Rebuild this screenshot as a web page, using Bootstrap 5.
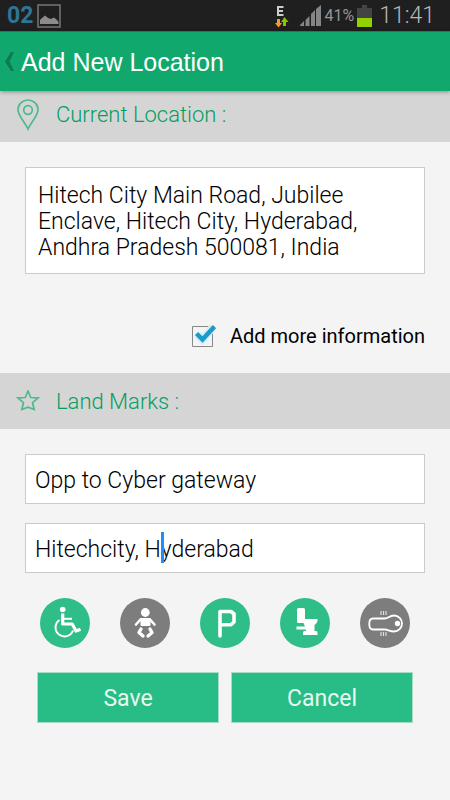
<!DOCTYPE html>
<html lang="en">
<head>
<meta charset="utf-8">
<meta name="viewport" content="width=device-width, initial-scale=1">
<title>Add New Location</title>
<link href="https://cdn.jsdelivr.net/npm/bootstrap@5.3.0/dist/css/bootstrap.min.css" rel="stylesheet">
<style>
  body { background: #f4f4f4; font-family: Roboto, "Liberation Sans", sans-serif; color: #000; }
  .status-bar { background: #1f1f1f; height: 31px; color: #969696; padding: 0 15px 0 7px; }
  .status-count { color: #2f7596; font-size: 23px; line-height: 31px; font-weight: 700; }
  .status-signals { gap: 3px; }
  .status-percent { font-size: 16px; line-height: 31px; }
  .status-clock { font-size: 23px; line-height: 28px; font-weight: 300; color: #b8b8b8; }
  .app-bar { background: #11a86d; height: 60px; padding: 0 5px; gap: 7px; box-shadow: 0 1px 4px rgba(0, 0, 0, .35); border-top: 1px solid #0b8757; }
  .app-title { font-family: "Liberation Sans", Arial, sans-serif; font-size: 25px; line-height: 30px; color: #fff; }
  .section-head { background: #d5d5d5; color: #11a86d; padding: 2px 16px 0; gap: 16px; height: 56px; }
  .section-head.first { height: 51px; padding: 0 16px 4px; }
  .section-head h2 { font-size: 22px; line-height: 26px; font-weight: 300; color: #049e60; }
  .section-head svg { stroke: #4dba8c; }
  .field { border: 1px solid #cbcbcb; border-radius: 0; color: #000; background: #fff; font-size: 23px; line-height: 26px; font-weight: 300; }
  .field:focus { box-shadow: none; border-color: #cbcbcb; }
  textarea.field { padding: 15px 12px 13px; resize: none; overflow: hidden; height: 107px; }
  input.field { height: 50px; padding: 2px 9px 0; }
  .address { padding: 25px 25px 0; }
  .more-row { padding: 48px 25px 22px 0; gap: 14px; }
  .more-row label { font-size: 20px; line-height: 29px; }
  .tick { appearance: none; width: 24px; height: 24px; margin: 0;
    background: url("data:image/svg+xml,%3Csvg xmlns='http://www.w3.org/2000/svg' viewBox='0 0 24 24'%3E%3Cpath d='M.5 1.500h20v20H.5z' fill='%23f4f4f4' stroke='%23888'/%3E%3Cpath d='M5.500 9.500l5 5L21 2' fill='none' stroke='%23d4edf6' stroke-width='8'/%3E%3Cpath d='M4.500 8.500l6 6L22.500 1.500' fill='none' stroke='%231a9bc9' stroke-width='4.500'/%3E%3C/svg%3E") center / contain no-repeat; }
  .tick:not(:checked) { background: none; border: 1px solid #888; }
  .landmarks { padding: 25px 25px 0; gap: 19px; }
  .text-cursor { position: absolute; left: 136px; top: 9px; width: 3px; height: 31px; background: #1a8fff; }
  .amenities { padding: 25px 40px 0; }
  .amenity { width: 50px; height: 50px; border: 0; padding: 0; background: #2fbe87; }
  .amenity.off { background: #7d7d7d; }
  .actions { padding: 24px 37px 0; gap: 12px; }
  .action { height: 51px; border: 1px solid #a9dcc6; border-radius: 0; background: #28bd87; color: #e6f8f0; font-size: 23px; line-height: 28px; padding: 3px 0 0; }
  .action:hover { background: #20a776; color: #fff; }
</style>
</head>
<body>
<div class="status-bar d-flex align-items-center justify-content-between">
  <div class="d-flex align-items-center gap-1">
    <span class="status-count">02</span>
    <svg width="24" height="24" viewBox="0 0 24 24" aria-hidden="true"><path d="M1 1h22v22H1z" fill="none" stroke="#777" stroke-width="1.500"/><path d="M3 20v-4l2-2 3-2.500 3 2.500 3 1 3-1.500 3 2.500 1.500 2v2z" fill="#8b8b8b"/></svg>
  </div>
  <div class="status-signals d-flex align-items-center">
    <svg width="14" height="24" viewBox="0 0 14 24" aria-hidden="true"><path d="M8.500 3H3v8h5.500M3 7h5" fill="none" stroke="#ccc" stroke-width="2"/><path d="M2 15h3v4h2l-3.500 4.500L0 19h2z" fill="#f79a2c"/><path d="M8 22h3v-4h2.500L9.500 13 6 18h2z" fill="#8cc000"/></svg>
    <svg class="ms-2" width="21" height="21" viewBox="0 0 21 21" aria-hidden="true"><path d="M0 21v-1l4-4v5zm5.500 0v-6l4-4v10zm5.500 0V9l4-4v16zm5 0V4l5-4v21z" fill="#858585"/></svg>
    <span class="status-percent">41%</span>
    <svg width="15" height="22" viewBox="0 0 15 22" aria-hidden="true"><path d="M0 3h5V0h5v3h5v10H0z" fill="#444"/><path d="M0 13h15v9H0z" fill="#91d100"/></svg>
    <span class="status-clock ms-1">11:41</span>
  </div>
</div>

<header class="app-bar d-flex align-items-center position-relative">
  <a href="#" class="d-flex" aria-label="Back"><svg width="9" height="19" viewBox="0 0 9 19"><path d="M6 0h3L4.500 9.500 9 19H6L0 9.500z" fill="#0b7c50"/></svg></a>
  <h1 class="app-title m-0">Add New Location</h1>
</header>

<main>
  <div class="section-head first d-flex align-items-center">
    <svg width="24" height="32" viewBox="0 0 24 32" fill="none" stroke-width="1.700" aria-hidden="true"><path d="M12 30C9 23 2 17 2 10.500a10 9.500 0 0 1 20 0c0 6.500-7 12.500-10 19.500z"/><circle cx="12" cy="11" r="4.300"/></svg>
    <h2 class="m-0"><label for="address">Current Location :</label></h2>
  </div>
  <div class="address">
    <textarea id="address" class="form-control field d-block" rows="3">Hitech City Main Road, Jubilee Enclave, Hitech City, Hyderabad, Andhra Pradesh 500081, India</textarea>
  </div>
  <div class="more-row d-flex justify-content-end align-items-center">
    <input class="tick" type="checkbox" id="more" checked>
    <label for="more">Add more information</label>
  </div>

  <div class="section-head d-flex align-items-center">
    <svg width="24" height="24" viewBox="0 0 24 24" fill="none" stroke-width="1.700" aria-hidden="true"><path d="M12 1l2.700 6.500 7.300.500-5.500 4.700 1.700 6.800-6.200-2.300L5.800 19.500l1.700-6.800L2 8 9.300 7.500z"/></svg>
    <h2 class="m-0">Land Marks :</h2>
  </div>
  <div class="landmarks d-flex flex-column">
    <input class="form-control field" type="text" aria-label="Land mark" value="Opp to Cyber gateway">
    <div class="position-relative">
      <input class="form-control field" type="text" aria-label="Area" value="Hitechcity, Hyderabad">
      <span class="text-cursor"></span>
    </div>
  </div>

  <div class="amenities d-flex justify-content-between">
    <button type="button" class="amenity rounded-circle" aria-label="Wheelchair access"><svg width="50" height="50" viewBox="0 0 50 50" fill="none" stroke="#fff"><circle cx="22.700" cy="11.500" r="2.800" fill="#fff" stroke="none"/><path d="M22.700 15.500v10.500h9.500l3.800 7 4.500-1.800" stroke-width="3.200" stroke-linejoin="round"/><path d="M23 20.800h9" stroke-width="2"/><path d="M19.500 22a9 9 0 1 0 13.500 10.500" stroke-width="2"/></svg></button>
    <button type="button" class="amenity off rounded-circle" aria-label="Baby changing"><svg width="50" height="50" viewBox="0 0 50 50" fill="#fff" stroke="#fff" stroke-linecap="round" stroke-linejoin="round"><circle cx="25.300" cy="14.500" r="4.400" stroke="none"/><path d="M20.500 21.500L16 26.500M30 21.500l4.500 5" fill="none" stroke-width="2.600"/><path d="M21.500 21h8v6h-8z" stroke-width="2"/><path d="M21 31l-2 3.500 4 3.500M30 31l2 3.500-4 3.500" fill="none" stroke-width="3.400"/></svg></button>
    <button type="button" class="amenity rounded-circle" aria-label="Parking"><svg width="50" height="50" viewBox="0 0 50 50" fill="none" stroke="#fff" stroke-width="3.600" stroke-linecap="round" stroke-linejoin="round"><path d="M20 38V13.500h11L34 16v8l-3 2.800H20"/></svg></button>
    <button type="button" class="amenity rounded-circle" aria-label="Toilet"><svg width="50" height="50" viewBox="0 0 50 50" fill="#fff"><path d="M18.500 10h5q1.500 0 1.500 1.500v9.500h12.500v2q-.5 2.500-3 4v6h1.500q1.500 0 1.500 1.500v2.500H23v-2.500q0-1.500 1.500-1.500H26v-1.500h-9.500v-3H25l-1.500-3.500h-5q-1.500 0-1.500-1.500v-12q0-1.500 1.500-1.500z"/></svg></button>
    <button type="button" class="amenity off rounded-circle" aria-label="Hand dryer"><svg width="50" height="50" viewBox="0 0 50 50" fill="none" stroke="#fff"><path d="M13 20.500h12c3 0 4.500-3 9-3a8 8 0 0 1 0 16c-4.500 0-6-2-9-2H13c-5 0-5-11 0-11z" stroke-width="1.800"/><circle cx="37.500" cy="25.500" r="2.700" fill="#fff" stroke="none"/><path d="M21 13v4M23.500 13v4M26 13v4M21 34v4M23.500 34v4M26 34v4" stroke-width="1.200" stroke="#ddd"/></svg></button>
  </div>

  <div class="actions d-flex">
    <button type="submit" class="btn action flex-fill w-50">Save</button>
    <button type="button" class="btn action flex-fill w-50">Cancel</button>
  </div>
</main>
<script src="https://cdn.jsdelivr.net/npm/bootstrap@5.3.0/dist/js/bootstrap.bundle.min.js"></script>
</body>
</html>
